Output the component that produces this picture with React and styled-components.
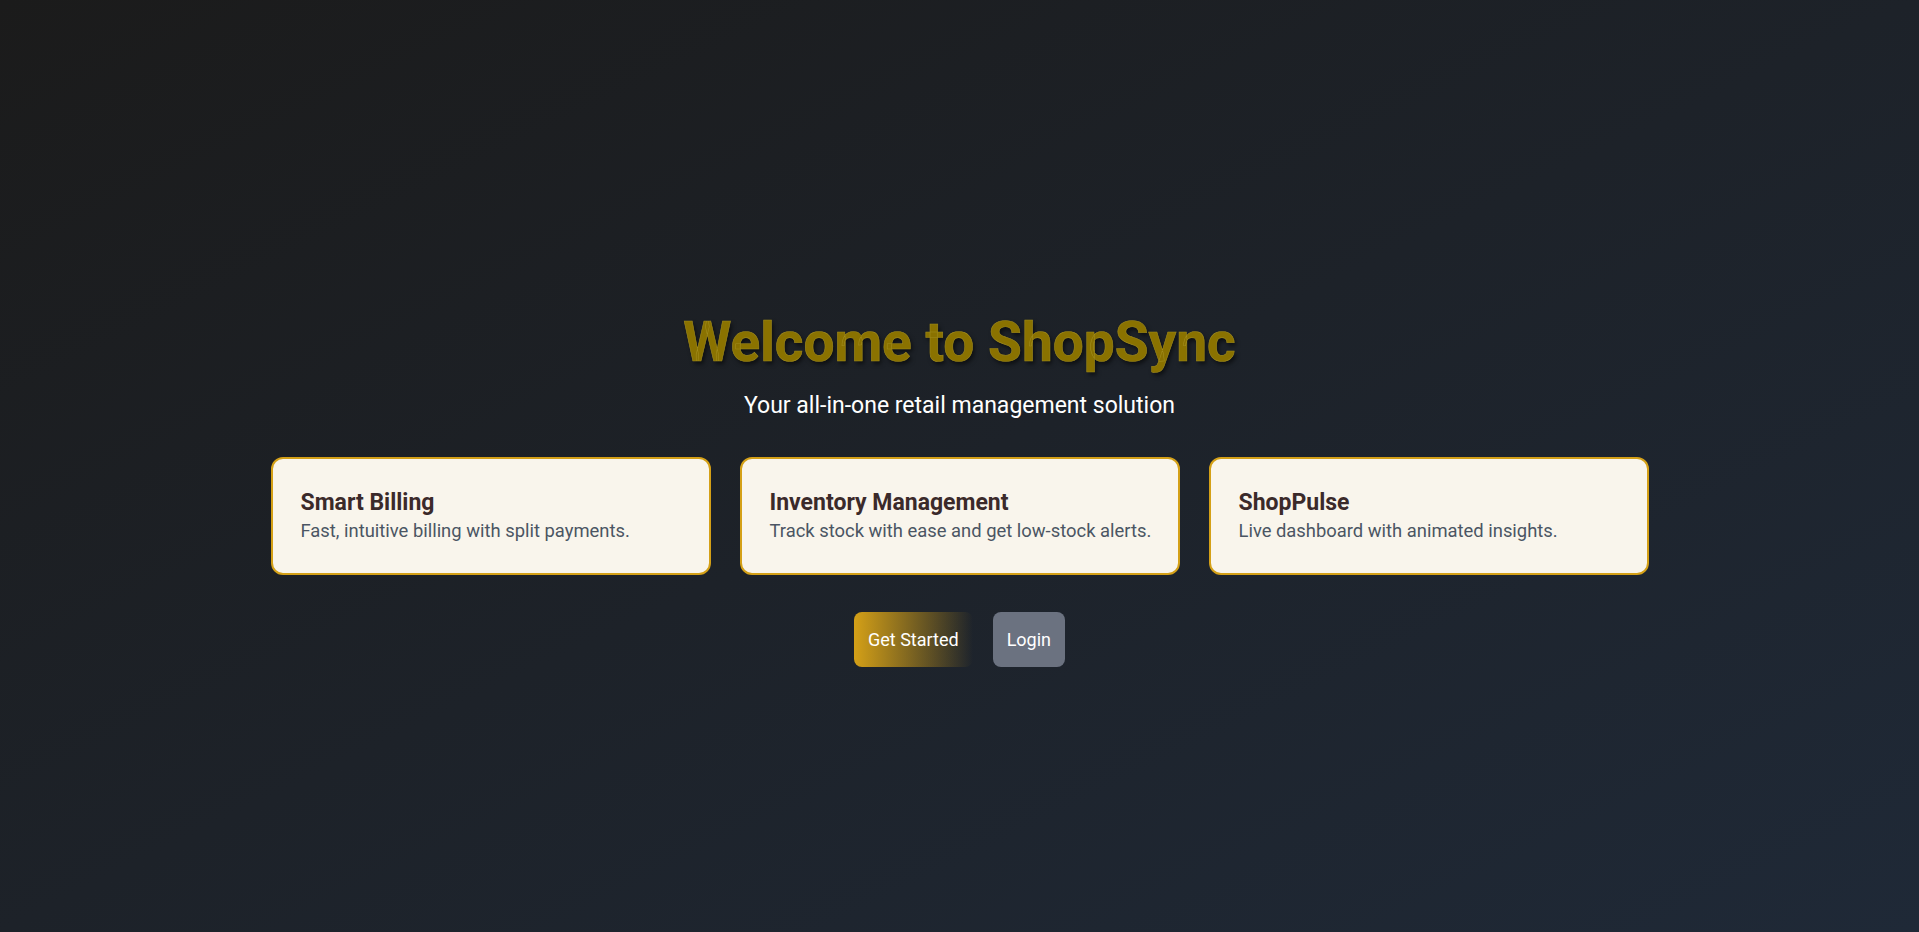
import React from 'react'
import styled, { createGlobalStyle } from 'styled-components'

const GlobalStyle = createGlobalStyle`
    * {
        box-sizing: border-box;
    }
    body {
        margin: 0;
        font-family: Roboto, "Liberation Sans", sans-serif;
    }
`;

const features = [
    { title: 'Smart Billing', text: 'Fast, intuitive billing with split payments.' },
    { title: 'Inventory Management', text: 'Track stock with ease and get low-stock alerts.' },
    { title: 'ShopPulse', text: 'Live dashboard with animated insights.' },
]

export default function App() {
    return (
        <>
            <GlobalStyle />
            <Page>
                <Hero>
                    <Title>Welcome to ShopSync</Title>
                    <Subtitle>Your all-in-one retail management solution</Subtitle>
                    <CardRow>
                        {features.map(f => (
                            <Card key={f.title}>
                                <CardTitle>{f.title}</CardTitle>
                                <CardText>{f.text}</CardText>
                            </Card>
                        ))}
                    </CardRow>
                    <ButtonRow>
                        <Button $variant="primary">Get Started</Button>
                        <Button>Login</Button>
                    </ButtonRow>
                </Hero>
            </Page>
        </>
    )
}

const Page = styled.div`
    min-height: 100vh;
    display: flex;
    align-items: center;
    justify-content: center;
    background: linear-gradient(to bottom right, #1b1b1b, #1f2937);
    color: #fff;
`;

const Hero = styled.div`
    display: flex;
    flex-direction: column;
    align-items: center;
    padding-top: 47px;
`;

const Title = styled.h1`
    margin: 0;
    font-size: 55px;
    line-height: 1.1;
    font-weight: 700;
    color: #8a7200;
    -webkit-text-stroke: 0.6px #a08b1c;
    text-shadow: 2px 3px 4px rgba(0, 0, 0, 0.55);
`;

const Subtitle = styled.p`
    margin: 18px 0 0;
    font-size: 23px;
    line-height: 30px;
    color: #ffffff;
`;

const CardRow = styled.div`
    display: grid;
    grid-template-columns: repeat(3, 440px);
    gap: 29px;
    margin-top: 36px;
`;

const Card = styled.div`
    background: #f9f5ec;
    border: 2px solid #d4a017;
    border-radius: 12px;
    padding: 29px 20px 26px 28px;
    height: 118px;
`;

const CardTitle = styled.h3`
    margin: 0;
    font-size: 23px;
    line-height: 30px;
    font-weight: 700;
    color: #3b2a2a;
`;

const CardText = styled.p`
    margin: 0;
    font-size: 18.4px;
    line-height: 26px;
    color: #4b5563;
    white-space: nowrap;
`;

const ButtonRow = styled.div`
    display: flex;
    gap: 20px;
    margin-top: 37px;
`;

const Button = styled.button`
    height: 55px;
    padding: 0 14px;
    border: none;
    border-radius: 8px;
    font-family: Roboto, "Liberation Sans", sans-serif;
    font-size: 18px;
    color: #ffffff;
    cursor: pointer;
    background: ${p => p.$variant === 'primary'
        ? 'linear-gradient(to right, #d4a017, rgba(212, 160, 23, 0))'
        : '#6b7280'};
`;
